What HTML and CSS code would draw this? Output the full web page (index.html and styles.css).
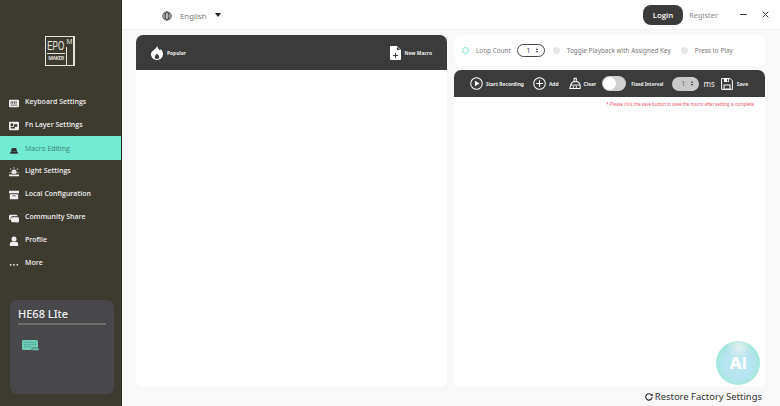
FILE: index.html
```html
<!DOCTYPE html>
<html lang="en">
<head>
<meta charset="utf-8">
<title>Macro Editing</title>
<link rel="stylesheet" href="styles.css">
</head>
<body>
<div class="app">
  <aside class="sidebar">
    <div class="logo">
      <div class="logo-box">
        <div class="logo-main"><span class="logo-epo">EPO</span><span class="logo-maker">MAKER</span></div>
        <div class="logo-side"><span class="logo-m">M</span><span class="logo-rule"></span></div>
      </div>
    </div>
    <nav class="nav">
      <a class="nav-item"><svg class="nav-icon" viewBox="0 0 12 12"><path fill="#eee" fill-rule="evenodd" d="M1 2h10a1 1 0 0 1 1 1v7a1 1 0 0 1-1 1H1a1 1 0 0 1-1-1V3a1 1 0 0 1 1-1zm1 2v3h1V4zm2 0v3h1V4zm2 0v3h1V4zm2 0v3h1V4zM2 8v1h8V8z"/></svg>Keyboard Settings</a>
      <a class="nav-item"><svg class="nav-icon" viewBox="0 0 12 12"><path fill="#eee" fill-rule="evenodd" d="M1 1h10a1 1 0 0 1 1 1v8a1 1 0 0 1-1 1H1a1 1 0 0 1-1-1V2a1 1 0 0 1 1-1zm1 2v3h3V3zm4 1v3h4V4zM2 7v2h5V7z"/></svg>Fn Layer Settings</a>
      <a class="nav-item active"><svg class="nav-icon" viewBox="0 0 12 12"><path fill="#333" d="M3.500 3.500h5L10 8H2zM1.500 8.500h9V10.500h-9z"/></svg>Macro Editing</a>
      <a class="nav-item"><svg class="nav-icon" viewBox="0 0 12 12"><path fill="#eee" d="M3 6a3 3 0 0 1 6 0v2H3zM0 9h12v2H0zM5.600 0h.8v2h-.8zM1 2l.6-.5L3 3l-.6.5zM11 2l-.6-.5L9 3l.6.5zM0 6h2v.7H0zM10 6h2v.7h-2z"/></svg>Light Settings</a>
      <a class="nav-item"><svg class="nav-icon" viewBox="0 0 12 12"><path fill="#eee" fill-rule="evenodd" d="M0 1h12v3H0zM1 5h10v6H1zm3 1.500v1h4v-1z"/></svg>Local Configuration</a>
      <a class="nav-item"><svg class="nav-icon" viewBox="0 0 12 12"><path fill="#eee" d="M1.500 2h7A1.500 1.500 0 0 1 10 3.500V4H4a2 2 0 0 0-2 2v2.500H1.500A1.500 1.500 0 0 1 0 7V3.500A1.500 1.500 0 0 1 1.500 2z"/><path fill="#eee" d="M4 5h6.500A1.500 1.500 0 0 1 12 6.500v3a1.500 1.500 0 0 1-1.500 1.500V12L9 11H4a1.500 1.500 0 0 1-1.500-1.500v-3A1.500 1.500 0 0 1 4 5z"/></svg>Community Share</a>
      <a class="nav-item"><svg class="nav-icon" viewBox="0 0 12 12"><circle fill="#eee" cx="6" cy="3.500" r="3"/><path fill="#eee" d="M1 12V9.500A2.500 2.500 0 0 1 3.500 7h5A2.500 2.500 0 0 1 11 9.500V12z"/></svg>Profile</a>
      <a class="nav-item"><svg class="nav-icon" viewBox="0 0 12 12"><g fill="#eee"><circle cx="2" cy="7" r="1.100"/><circle cx="6" cy="7" r="1.100"/><circle cx="10" cy="7" r="1.100"/></g></svg>More</a>
    </nav>
    <section class="device">
      <h2 class="device-name">HE68 LIte</h2>
      <svg class="device-icon" viewBox="0 0 17 12"><rect x="0" y="0" width="16" height="10" rx="1.500" fill="#6fcdb7"/><path stroke="#3f8f80" stroke-width=".7" stroke-dasharray="1 .6" fill="none" d="M2 2.500h12M2 4.500h12M2 6.500h8"/><rect x="10" y="8" width="7" height="2.500" rx=".6" fill="#6fcdb7" stroke="#444" stroke-width=".6"/></svg>
    </section>
  </aside>

  <div class="content">
    <header class="topbar">
      <div class="lang">
        <svg class="globe" viewBox="0 0 12 12"><g fill="none" stroke="#333" stroke-width="1"><circle cx="6" cy="6" r="5"/><ellipse cx="6" cy="6" rx="2.300" ry="5"/><path d="M1 6h10M1.700 3.500h8.600M1.700 8.500h8.600"/></g></svg>
        <span class="lang-name">English</span>
        <span class="caret"></span>
      </div>
      <div class="account">
        <button class="login">Login</button>
        <span class="register">Register</span>
        <span class="win-min"></span>
        <svg class="win-close" viewBox="0 0 8 8"><path d="M.7.700l6.600 6.600M7.300.700L.7 7.300" stroke="#333" stroke-width="1.100"/></svg>
      </div>
    </header>

    <main class="panels">
      <section class="panel-left">
        <div class="bar bar-left">
          <div class="bar-group">
            <svg class="flame" viewBox="0 0 12 14"><path fill="#fff" fill-rule="evenodd" d="M6.300 0c.3 2.200 1.400 3.200 2.700 4.500.4-.4.600-.9.700-1.400C11 4.400 12 6.200 12 8.100 12 11.400 9.500 14 6 14S0 11.400 0 8.100C0 4.800 4.800 3.600 6.300 0zM6 7.500C5 8.800 3.800 9.700 3.800 11c0 1.200 1 1.900 2.200 1.900s2.200-.7 2.200-1.900C8.200 9.700 7 8.800 6 7.500z"/></svg>
            <span class="bar-label">Popular</span>
          </div>
          <div class="bar-group">
            <svg class="newdoc" viewBox="0 0 11 14"><path fill="#fff" fill-rule="evenodd" d="M1 0h6l4 4v9a1 1 0 0 1-1 1H1a1 1 0 0 1-1-1V1a1 1 0 0 1 1-1zm6 .8V4h3.200zM5 7v2H3v1h2v2h1v-2h2V9H6V7z"/></svg>
            <span class="bar-label">New Macro</span>
          </div>
        </div>
        <div class="panel-body"></div>
      </section>

      <section class="panel-right">
        <div class="options">
          <span class="radio on"></span>
          <span class="opt-label">Loop Count</span>
          <span class="spin spin-loop"><span class="spin-val">1</span><span class="arrows"><i class="up"></i><i class="down"></i></span></span>
          <span class="radio off radio-toggle"></span>
          <span class="opt-label">Toggle Playback with Assigned Key</span>
          <span class="radio off radio-press"></span>
          <span class="opt-label">Press to Play</span>
        </div>
        <div class="bar bar-right">
          <svg class="tool-icon" viewBox="0 0 14 14"><circle cx="7" cy="7" r="6.200" fill="none" stroke="#fff" stroke-width="1.100"/><path fill="#fff" d="M5.300 4l5 3-5 3z"/></svg>
          <span class="tool-label t-rec">Start Recording</span>
          <svg class="tool-icon" viewBox="0 0 14 14"><circle cx="7" cy="7" r="6.200" fill="none" stroke="#fff" stroke-width="1.100"/><path stroke="#fff" stroke-width="1.200" d="M7 3.500v7M3.500 7h7"/></svg>
          <span class="tool-label t-add">Add</span>
          <svg class="tool-icon tool-clear" viewBox="0 0 14 14"><path fill="none" stroke="#fff" stroke-width="1.200" d="M6 .8h2.500v4.200H6zM1 12.800L2 8.500C2.500 6.500 3.500 5.500 5 5h5c1.500.5 2.500 1.500 3 4v3.800z"/><path stroke="#fff" stroke-width="1.100" d="M2 8.800h10.500M5 10v3M8.500 10v3"/></svg>
          <span class="tool-label t-clear">Clear</span>
          <span class="switch"><span class="knob"></span></span>
          <span class="tool-label t-fixed">Fixed Interval</span>
          <span class="spin spin-ms"><span class="spin-val">1</span><span class="arrows"><i class="up"></i><i class="down"></i></span></span>
          <span class="ms">ms</span>
          <svg class="tool-icon save" viewBox="0 0 12 12"><path fill="none" stroke="#fff" stroke-width="1" d="M.6.6h8.600l2.200 2.200v8.600H.6z"/><path fill="#fff" d="M3 .6h5v3.400H3zM2.500 6.500h7v5h-7z"/><path fill="#3b3b3b" d="M6 1.200h1.200v2.100H6zM3.500 7.500h5v3h-5z"/></svg>
          <span class="tool-label">Save</span>
        </div>
        <div class="panel-body panel-body-right">
          <p class="notice">* Please click the save button to save the macro after setting is complete</p>
        </div>
        <div class="ai-badge"><span>AI</span></div>
      </section>
    </main>

    <footer class="footer">
      <svg class="restore-icon" viewBox="0 0 10 10"><path fill="none" stroke="#222" stroke-width="1.300" d="M8.300 2.600A4 4 0 1 0 9 5"/><path fill="#222" d="M9.600.8v3H6.600z"/></svg>
      <span>Restore Factory Settings</span>
    </footer>
  </div>
</div>
</body>
</html>
```

FILE: styles.css
```css
* { box-sizing: border-box; }
html, body { margin: 0; height: 100%; }
body { font-family: "Noto Sans", "Open Sans", sans-serif; color: #333; overflow: hidden; }
.app { display: flex; width: 780px; height: 406px; background: #f8f8f8; }

.sidebar { width: 122px; flex: none; background: #3d3a30; border-right: 1px solid #2f2d26; display: flex; flex-direction: column; padding-top: 36px; }
.logo { display: flex; justify-content: center; height: 30px; padding-right: 1px; }
.logo-box { width: 30px; height: 30px; display: flex; border: 1px solid #e4e4de; border-right-width: 2px; color: #e8e8e2; }
.logo-main { width: 20px; flex: none; display: flex; flex-direction: column; align-items: center; padding-top: 2px; overflow: hidden; }
.logo-epo { font-family: "Liberation Sans", sans-serif; font-size: 13px; line-height: 13px; height: 14px; transform: scaleX(.62); white-space: nowrap; }
.logo-maker { font-size: 5px; line-height: 8px; width: 18px; text-align: center; border-top: 1px solid #e4e4de; color: #dcdcd6; letter-spacing: -.4px; font-weight: 700; white-space: nowrap; }
.logo-side { flex: 1; display: flex; flex-direction: column; }
.logo-m { font-family: "Liberation Sans", sans-serif; font-size: 7px; line-height: 10px; height: 10px; text-align: center; }
.logo-rule { flex: 1; width: 1px; background: #e4e4de; }

.nav { display: flex; flex-direction: column; margin-top: 24px; }
.nav-item { height: 23px; display: flex; align-items: center; gap: 6px; padding-left: 9px; font-family: "Open Sans", sans-serif; font-size: 7px; font-weight: 600; color: #eee; white-space: nowrap; }
.nav-item.active { background: #71ecd2; color: #3f7f74; font-weight: 400; height: 24px; margin-bottom: -1px; }
.nav-icon { width: 10px; height: 10px; flex: none; margin-top: 3px; }

.device { margin: 26px 0 0 10px; width: 104px; height: 94px; border-radius: 7px; background: #48484a; padding: 5px 8px; }
.device-name { margin: 0; font-size: 11px; font-weight: 500; line-height: 18px; color: #f2f2f2; border-bottom: 2px solid #6c6c6c; height: 20px; }
.device-icon { display: block; width: 17px; height: 12px; margin: 15px 0 0 4px; }

.content { flex: 1; min-width: 0; display: flex; flex-direction: column; }
.topbar { height: 30px; flex: none; background: #fff; border-bottom: 1px solid #f1f1f1; display: flex; align-items: center; justify-content: space-between; padding: 0 11px 0 40px; }
.lang { display: flex; align-items: center; padding-top: 3px; }
.globe { width: 10px; height: 10px; margin-right: 8px; margin-top: -1px; }
.lang-name { font-size: 7.800px; color: #777; width: 35px; }
.caret { border: 3px solid transparent; border-top: 4px solid #222; border-bottom: 0; width: 0; height: 0; margin-top: -3px; }
.account { display: flex; align-items: center; }
.login { width: 40px; height: 20px; padding: 0; border: 0; border-radius: 8px; background: #3b3b3b; color: #fff; font: 600 7.800px "Open Sans", sans-serif; }
.register { font-size: 7.500px; color: #8a8a8a; margin-left: 6px; width: 51px; }
.win-min { width: 7px; height: 1px; background: #444; }
.win-close { width: 7px; height: 7px; margin-left: 15px; }

.panels { height: 352px; margin: 5px 15px 0 14px; display: flex; gap: 7px; flex: none; }
.panel-left { width: 311px; display: flex; flex-direction: column; }
.panel-right { width: 311px; display: flex; flex-direction: column; position: relative; }
.bar { background: #3b3b3b; display: flex; align-items: center; color: #fff; }
.bar-left { height: 35px; border-radius: 7px 7px 0 0; justify-content: space-between; padding: 0 15px; flex: none; }
.bar-group { display: flex; align-items: center; gap: 4px; }
.bar-label { font-size: 4.900px; font-weight: 700; color: #eee; white-space: nowrap; }
.flame { width: 12px; height: 14px; }
.newdoc { width: 11px; height: 14px; }
.panel-body { flex: 1; background: #fff; border-radius: 0 0 7px 7px; }
.panel-body-right { position: relative; }

.options { height: 31px; flex: none; background: #fff; border-radius: 7px; display: flex; align-items: center; padding-left: 8px; margin-bottom: 4px; }
.radio { width: 7px; height: 7px; border-radius: 50%; flex: none; }
.radio.on { border: 1.500px solid #6fe3cc; background: #fff; }
.radio.off { background: #e8e8e8; }
.radio-toggle { margin-left: 8px; margin-right: 7px; }
.radio-press { margin-left: 10px; margin-right: 7px; }
.radio.on + .opt-label { margin-left: 7px; }
.opt-label { font-size: 6.400px; color: #777; white-space: nowrap; }
.spin { display: flex; align-items: center; border-radius: 7px; }
.spin-loop { width: 28px; height: 13px; margin-left: 6px; border: 1px solid #444; color: #444; }
.spin-ms { width: 27px; height: 14px; margin-left: 9px; background: #c9c9c9; color: #666; }
.spin-val { flex: 1; text-align: center; font-size: 6.500px; padding-left: 3px; }
.arrows { width: 8px; display: flex; flex-direction: column; gap: 1px; flex: none; }
.arrows i { width: 0; height: 0; border: 1.500px solid transparent; }
.arrows .up { border-bottom: 2px solid #333; border-top: 0; }
.arrows .down { border-top: 2px solid #333; border-bottom: 0; }

.bar-right { height: 27px; flex: none; border-radius: 7px 7px 0 0; padding-left: 16px; }
.tool-icon { width: 13px; height: 13px; flex: none; }
.tool-clear { width: 12px; }
.tool-label { font-size: 4.900px; font-weight: 700; color: #eee; white-space: nowrap; margin-left: 3px; }
.t-rec { margin-right: 9px; }
.t-add { margin-right: 10px; }
.t-clear { margin-right: 6px; }
.switch { width: 24px; height: 15px; border-radius: 8px; background: #d0d0d0; flex: none; display: flex; align-items: center; padding-left: 1px; }
.knob { width: 13px; height: 13px; background: #fff; border-radius: 50%; }
.t-fixed { margin-left: 5px; font-size: 4.700px; }
.ms { font-size: 8px; color: #eee; margin-left: 4px; margin-right: 6px; }
.save { margin-right: 1px; width: 12px; height: 12px; }

.notice { margin: 0; padding: 4px 11px 0 0; text-align: right; font-size: 4.350px; color: #f0536b; white-space: nowrap; }

.ai-badge { position: absolute; right: 5px; bottom: 2px; width: 44px; height: 44px; border-radius: 50%; background: radial-gradient(circle at 52% 14%, rgba(235,240,240,.9) 0%, rgba(235,240,240,0) 28%), radial-gradient(circle at 50% 52%, #bfe6f3 0%, #b4e5ee 48%, #9ee8d2 78%, #a6e2ee 100%); display: flex; align-items: center; justify-content: center; color: #fff; font: 800 16.500px Inter, "Open Sans", sans-serif; }

.footer { flex: 1; display: flex; align-items: center; justify-content: flex-end; padding: 0 18px 0 0; gap: 2px; font-size: 9.450px; color: #333; background: #f8f8f8; }
.restore-icon { width: 8px; height: 8px; }
```
